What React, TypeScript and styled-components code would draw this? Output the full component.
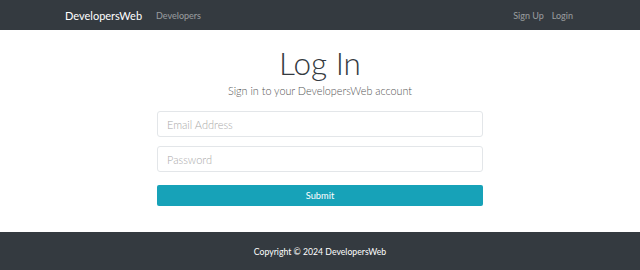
import React from "react";
import styled, { createGlobalStyle } from "styled-components";

const GlobalStyle = createGlobalStyle`
  html, body {
    margin: 0;
    padding: 0;
    background: #fff;
    font-family: Lato, "Noto Sans", sans-serif;
  }
  * { box-sizing: border-box; }
`;

const Page = styled.div`
  display: flex;
  flex-direction: column;
  height: 270px;
`;

const Navbar = styled.nav`
  height: 30px;
  background-color: #343a40;
  display: flex;
  align-items: center;
  justify-content: space-between;
  padding: 0 67px 0 65px;
`;

const NavGroup = styled.div`
  display: flex;
  align-items: center;
  gap: ${(p: { $gap: number }) => p.$gap}px;
`;

const Brand = styled.a`
  color: #fff;
  font-size: 11px;
  text-decoration: none;
`;

const NavLink = styled.a`
  color: rgba(255, 255, 255, 0.5);
  font-size: 9px;
  text-decoration: none;
`;

const Main = styled.main`
  flex: 1;
  display: flex;
  flex-direction: column;
  align-items: center;
  padding-top: 13px;
`;

const Title = styled.h1`
  margin: 0;
  font-size: 31.5px;
  font-weight: 300;
  color: #343a40;
  line-height: 40px;
`;

const Lead = styled.p`
  margin: 0 0 12px;
  font-size: 10.8px;
  font-weight: 300;
  color: #555;
  line-height: 16px;
`;

const Form = styled.form`
  width: 326px;
  display: flex;
  flex-direction: column;
  gap: 9px;
`;

const Input = styled.input`
  height: 26px;
  width: 100%;
  border: 1px solid #e3e6e9;
  border-radius: 3px;
  padding: 0 9px;
  font-family: inherit;
  font-size: 11px;
  font-weight: 300;
  color: #495057;
  &::placeholder {
    color: #a9a9a9;
  }
`;

const Button = styled.button`
  margin-top: 4px;
  height: 21px;
  width: 100%;
  border: none;
  border-radius: 2px;
  background-color: #17a2b8;
  color: #fff;
  font-family: inherit;
  font-size: 9.3px;
`;

const Footer = styled.footer`
  height: 38px;
  background-color: #343a40;
  display: flex;
  align-items: center;
  justify-content: center;
  color: #fff;
  font-size: 8.7px;
`;

export default function App() {
  return (
    <>
      <GlobalStyle />
      <Page>
        <Navbar>
          <NavGroup $gap={14}>
            <Brand href="#">DevelopersWeb</Brand>
            <NavLink href="#">Developers</NavLink>
          </NavGroup>
          <NavGroup $gap={8}>
            <NavLink href="#">Sign Up</NavLink>
            <NavLink href="#">Login</NavLink>
          </NavGroup>
        </Navbar>
        <Main>
          <Title>Log In</Title>
          <Lead>Sign in to your DevelopersWeb account</Lead>
          <Form onSubmit={(e) => e.preventDefault()}>
            <Input type="email" placeholder="Email Address" />
            <Input type="password" placeholder="Password" />
            <Button type="submit">Submit</Button>
          </Form>
        </Main>
        <Footer>Copyright © 2024 DevelopersWeb</Footer>
      </Page>
    </>
  );
}
